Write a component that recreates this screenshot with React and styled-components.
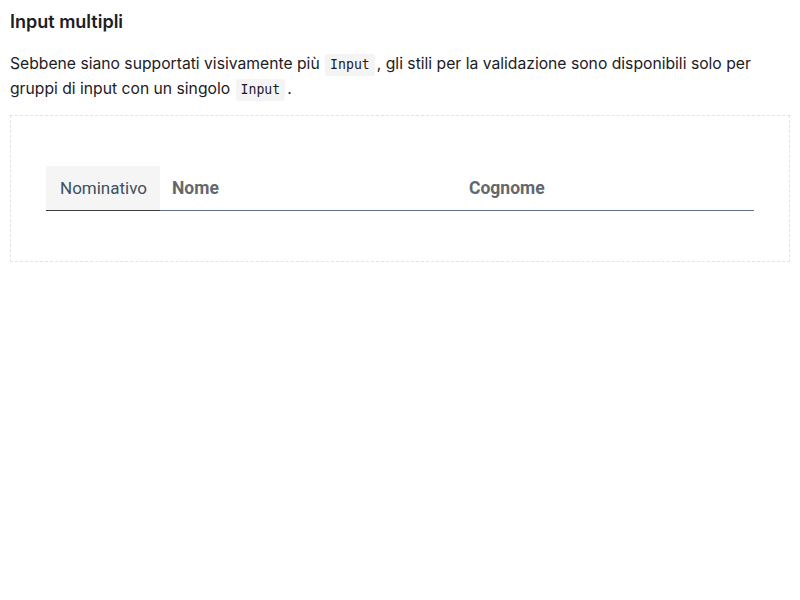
import styled, { createGlobalStyle } from "styled-components"

const GlobalStyle = createGlobalStyle`
    body {
        margin: 0;
        background: #fff;
        font-family: Inter, "Liberation Sans", sans-serif;
        color: #1c2024;
    }
`

function App() {
    return (
        <Page>
            <GlobalStyle />
            <Title>Input multipli</Title>
            <Text>
                Sebbene siano supportati visivamente più <Code>Input</Code>, gli stili per la validazione sono disponibili solo per
                gruppi di input con un singolo <Code>Input</Code>.
            </Text>
            <Example>
                <InputGroup>
                    <Prepend>Nominativo</Prepend>
                    <Field placeholder="Nome" />
                    <Field placeholder="Cognome" />
                </InputGroup>
            </Example>
        </Page>
    )
}

export default App

const Page = styled.div`
    padding: 10px 10px;
`

const Title = styled.h3`
    margin: 0 0 17px;
    font-size: 18px;
    font-weight: 600;
    line-height: 24px;
    color: #1c2024;
`

const Text = styled.p`
    margin: 0 0 14px;
    font-size: 15.7px;
    line-height: 25px;
    color: #1c2024;
`

const Code = styled.code`
    display: inline-block;
    font-family: "DejaVu Sans Mono", monospace;
    font-size: 13.2px;
    line-height: 16px;
    background: #f4f4f5;
    border-radius: 3px;
    padding: 3px 5px;
    margin: 0 2px 0 1px;
    vertical-align: 0;
    color: #1c2024;
`

const Example = styled.div`
    border: 1px dashed #e3e3e3;
    padding: 50px 35px;
`

const InputGroup = styled.div`
    display: flex;
    align-items: stretch;
    height: 45px;
`

const Prepend = styled.div`
    display: flex;
    align-items: center;
    padding: 0 13px 0 14px;
    background: #f5f5f5;
    border-bottom: 1px solid #3a3f44;
    font-family: Roboto, "Open Sans", sans-serif;
    font-size: 17px;
    color: #3d4f61;
`

const Field = styled.input`
    flex: 1;
    min-width: 0;
    border: none;
    border-bottom: 1px solid #5c6f82;
    outline: 0;
    padding: 0 12px;
    background: transparent;
    font-family: Roboto, "Open Sans", sans-serif;
    font-size: 17.5px;
    font-weight: 700;

    &::placeholder {
        color: #64686c;
        opacity: 1;
    }
`
